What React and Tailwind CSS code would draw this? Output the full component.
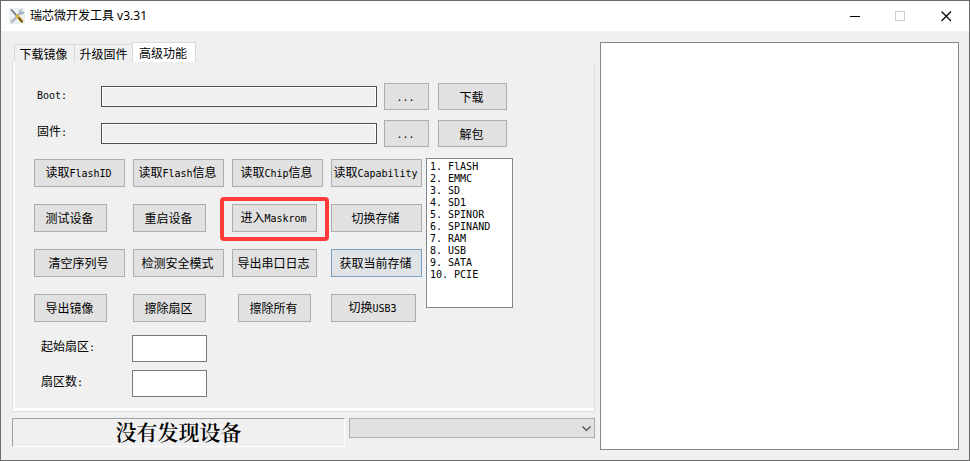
import React from "react";

function Mixed({ text }) {
  return text.split(/([\x20-\x7e]+)/).filter(Boolean).map((part, i) =>
    /^[\x20-\x7e]/.test(part) ? (
      <span key={i} className="font-['DejaVu_Sans_Mono','Liberation_Mono',monospace] text-[10px] whitespace-pre">{part}</span>
    ) : (
      <span key={i}>{part}</span>
    )
  );
}

function Btn({ text, className = "", size = "w-full h-7" }) {
  return (
    <button
      type="button"
      className={`flex items-center justify-center whitespace-nowrap border pr-[2px] leading-4 ${size} ${className || "border-[#adadad] bg-[#e1e1e1]"}`}
    >
      <span><Mixed text={text} /></span>
    </button>
  );
}

function FileRow({ id, label, action }) {
  return (
    <div className="flex h-[27px] items-center">
      <label htmlFor={id} className="w-16 pb-1 leading-4"><Mixed text={label} /></label>
      <input
        id={id}
        readOnly
        className="h-[21px] w-[276px] border border-[#4e4e4e] bg-[#f0f0f0] px-1 shadow-[inset_0_0_0_1px_#ffffff] outline-none"
      />
      <div className="ml-[7px] flex gap-[9px]">
        <Btn text="..." size="w-[45px] h-[27px]" />
        <Btn text={action} size="w-[69px] h-[27px]" />
      </div>
    </div>
  );
}

function SectorRow({ id, label }) {
  return (
    <div className="flex h-[27px] items-center">
      <label htmlFor={id} className="w-[91px] pb-1 leading-4"><Mixed text={label} /></label>
      <input id={id} className="h-[27px] w-[75px] border border-[#7a7a7a] bg-white px-1 outline-none" />
    </div>
  );
}

const storages = ["1. FlASH", "2. EMMC", "3. SD", "4. SD1", "5. SPINOR", "6. SPINAND", "7. RAM", "8. USB", "9. SATA", "10. PCIE"];

function TitleBar() {
  return (
    <header className="flex h-[30px] items-center bg-white">
      <svg className="ml-2 h-4 w-4" viewBox="0 0 16 16" aria-hidden="true">
        <rect width="16" height="16" fill="#edf0f3" />
        <path d="M3 14 L11 5" stroke="#a9b6c2" strokeWidth="2.4" />
        <path d="M10 5 L10.5 2 L13 .8 L12.4 3 L13.6 4 L15.3 3 L15 5.6 L12.5 7 Z" fill="#a9b6c2" />
        <path d="M1 12.5 L3.2 11 L5.2 13 L3.4 15.4 L1.4 15.2 L3 13.8 Z" fill="#b8c3cc" />
        <path d="M2 1.5 L8 8" stroke="#59616a" strokeWidth="1.3" />
        <path d="M7.2 7 L9 6.4 L14.6 12.6 L13 15 L11.4 14.4 L7 8.8 Z" fill="#e0b43c" />
        <path d="M9.5 9.5 L13.6 14.4" stroke="#4a4028" strokeWidth="1.4" />
      </svg>
      <h1 className="ml-[5px] flex-1 font-['Noto_Sans','Noto_Sans_CJK_SC',sans-serif] text-[12px] leading-4">瑞芯微开发工具 v3.31</h1>
      <button type="button" aria-label="最小化" className="flex h-[30px] w-[46px] items-center justify-center">
        <svg width="11" height="11" viewBox="0 0 11 11"><path d="M0 5.5H10" stroke="#000" /></svg>
      </button>
      <button type="button" aria-label="最大化" disabled className="flex h-[30px] w-[45px] items-center justify-center">
        <svg width="11" height="11" viewBox="0 0 11 11"><rect x=".5" y=".5" width="9" height="9" fill="none" stroke="#cccccc" /></svg>
      </button>
      <button type="button" aria-label="关闭" className="flex h-[30px] w-[46px] items-center justify-center">
        <svg width="11" height="11" viewBox="0 0 11 11"><path d="M.5 .5L10 10M10 .5L.5 10" stroke="#000" strokeWidth="1.2" /></svg>
      </button>
    </header>
  );
}

export default function App() {
  return (
    <div className="flex min-h-screen flex-col border border-[#6b6b6b] bg-[#f0f0f0] font-['Noto_Sans_CJK_SC',sans-serif] text-[12px] text-black">
      <TitleBar />
      <main className="flex flex-1 gap-[5px] pt-[11px] pr-[10px] pb-[10px] pl-[11px]">
        <section className="flex w-[583px] shrink-0 flex-col pb-[3px]">
          <div role="tablist" className="flex h-5 items-end pl-[2px]">
            <button type="button" role="tab" className="h-[18px] w-[60px] border-t border-l border-[#d9d9d9] pr-[2px] leading-4 whitespace-nowrap">下载镜像</button>
            <button type="button" role="tab" className="h-[18px] w-[58px] border-t border-l border-[#d9d9d9] leading-4 whitespace-nowrap">升级固件</button>
            <button type="button" role="tab" aria-selected="true" className="h-5 w-16 border border-b-0 border-[#d9d9d9] bg-white pr-[2px] leading-4 whitespace-nowrap">高级功能</button>
          </div>
          <div role="tabpanel" className="flex flex-1 border-x border-b border-[#dcdcdc]">
            <div className="flex-1 border-b-3 border-l-2 border-white pt-[21px] pl-[19px]">
              <div className="flex flex-col gap-[10px] pl-[3px]">
                <FileRow id="boot" label="Boot:" action="下载" />
                <FileRow id="firmware" label="固件:" action="解包" />
              </div>
              <div className="mt-[11px] flex items-start gap-1">
                <div className="mt-px grid grid-cols-[repeat(4,91px)] content-start gap-x-2 gap-y-[17px]">
                  <Btn text="读取FlashID" />
                  <Btn text="读取Flash信息" />
                  <Btn text="读取Chip信息" />
                  <Btn text="读取Capability" />
                  <Btn text="测试设备" size="w-[73px] h-7" />
                  <Btn text="重启设备" size="w-[73px] h-7" />
                  <div className="relative w-[85px]">
                    <Btn text="进入Maskrom" />
                    <div className="pointer-events-none absolute -top-[7px] -right-3 -bottom-[9px] -left-3 rounded-[4px] border-4 border-[#fd3b38]" />
                  </div>
                  <Btn text="切换存储" />
                  <Btn text="清空序列号" />
                  <Btn text="检测安全模式" />
                  <Btn text="导出串口日志" size="w-[85px] h-7" />
                  <Btn text="获取当前存储" className="border-[#7a9ebe] bg-[#dfe3e6]" />
                  <Btn text="导出镜像" size="w-[73px] h-7" />
                  <Btn text="擦除扇区" size="w-[73px] h-7" />
                  <div className="flex w-[85px] justify-center">
                    <Btn text="擦除所有" size="w-[73px] h-7" />
                  </div>
                  <Btn text="切换USB3" size="w-[85px] h-7" />
                </div>
                <select
                  size={10}
                  aria-label="存储列表"
                  className="h-[150px] w-[87px] overflow-hidden border border-[#828790] bg-white py-[2px] pl-[3px] font-['DejaVu_Sans_Mono','Liberation_Mono',monospace] text-[10px] leading-3 outline-none"
                >
                  {storages.map((s) => (
                    <option key={s} className="h-3 min-h-3 p-0 leading-3">{s}</option>
                  ))}
                </select>
              </div>
              <div className="mt-[13px] flex flex-col gap-2 pl-[7px]">
                <SectorRow id="start" label="起始扇区:" />
                <SectorRow id="count" label="扇区数:" />
              </div>
            </div>
          </div>
          <div className="mt-[6px] flex items-start gap-1">
            <div
              role="status"
              className="flex h-[29px] w-[333px] items-center justify-center border border-t-[#a0a0a0] border-r-white border-b-white border-l-[#a0a0a0] pb-1 font-['SimSun','Noto_Serif_CJK_SC','Noto_Sans_CJK_SC',serif] text-[21px] leading-6 font-semibold"
            >
              没有发现设备
            </div>
            <div className="relative flex-1">
              <select aria-label="设备" className="block h-5 w-full appearance-none border border-[#adadad] bg-[#e1e1e1] px-1 outline-none" />
              <svg className="pointer-events-none absolute top-2 right-1" width="9" height="6" viewBox="0 0 9 6">
                <path d="M.5 .5L4.5 4.5L8.5 .5" fill="none" stroke="#444" strokeWidth="1.2" />
              </svg>
            </div>
          </div>
        </section>
        <textarea aria-label="日志" readOnly className="min-w-0 flex-1 resize-none border border-[#828790] bg-white p-1 outline-none" />
      </main>
    </div>
  );
}
